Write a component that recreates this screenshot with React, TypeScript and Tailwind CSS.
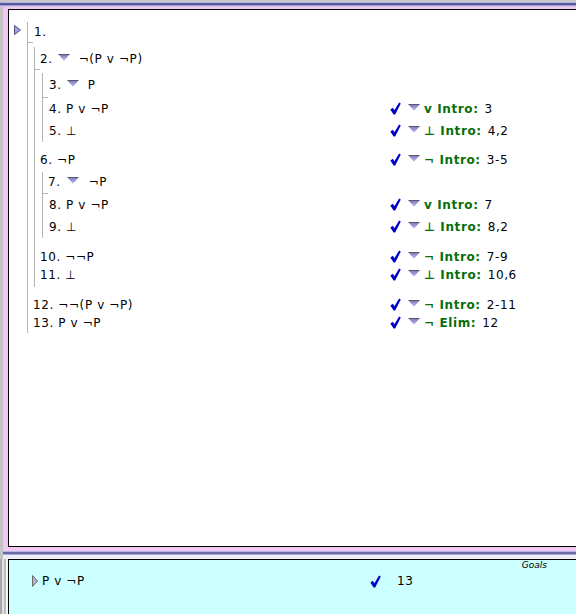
import React from "react";

const Check = () => (
  <svg width="11" height="13" viewBox="0 0 11 13" className="shrink-0">
    <path d="M0.3 7.4 L2.9 5.8 L4.4 8.2 L9.1 0.4 L10.8 1.5 L5.2 12.6 L3.6 12.6 Z" fill="#0000cc" />
  </svg>
);

const DownTri = () => (
  <svg width="12" height="7" viewBox="0 0 12 7" className="shrink-0">
    <defs>
      <linearGradient id="dg" x1="0" y1="0" x2="0" y2="1">
        <stop offset="0" stopColor="#7878b8" />
        <stop offset="1" stopColor="#c4c4f0" />
      </linearGradient>
    </defs>
    <polygon points="0.5,0.5 11.5,0.5 6,6.8" fill="url(#dg)" />
    <line x1="0.5" y1="0.5" x2="11.5" y2="0.5" stroke="#585868" strokeWidth="1" />
  </svg>
);

const Just = ({ sym, rule, refs }: { sym: string; rule: string; refs: string }) => (
  <div className="w-[186px] shrink-0 flex items-center">
    <Check />
    <span className="ml-[7px] mb-[3px] flex">
      <DownTri />
    </span>
    <span className="ml-[4px] font-bold text-[#0a6e0a] whitespace-pre">
      {sym} {rule}:
    </span>
    <span className="ml-[6px]">{refs}</span>
  </div>
);

const Tick = ({ cls }: { cls: string }) => <div className={cls} />;

export default function App() {
  return (
    <div className="w-[576px] h-[614px] overflow-hidden flex flex-col bg-[#c8c8c8] font-['DejaVu_Sans',sans-serif] text-[12px] leading-none text-black tracking-[0.6px]">
      <div className="h-[2px] shrink-0 bg-[#c8c8c8]" />
      <div className="h-[1px] shrink-0 bg-[#b4b4e6]" />
      <div className="h-[2px] shrink-0 bg-[#5a5a9a]" />
      <div className="h-[1px] shrink-0 bg-[#9a9ad6]" />
      <div className="h-[1px] shrink-0 bg-[#d8c8f0]" />
      <div className="h-[540px] shrink-0 flex">
        <div className="w-[3px] bg-[#c4c4c4]" />
        <div className="flex-1 bg-[#f0c8f0] pt-[2px] pl-[5px] flex">
          <div className="flex-1 bg-white border-t border-l border-b border-black flex items-start">
            <svg width="7" height="10" viewBox="0 0 7 10" className="ml-[5px] mt-[15px] shrink-0">
              <polygon points="0.5,0.5 6.5,5 0.5,9.5" fill="#a0a0e4" stroke="#505080" strokeWidth="1" />
            </svg>
            <div className="flex-1 ml-[6px] mt-[12px] border-l border-[#b4b4b4] pb-[3px]">
              <div className="h-[16px] pt-[3px] pl-[6px] flex items-center">1.</div>
              <Tick cls="mt-[4px] w-[5px] h-[1px] bg-[#b4b4b4]" />
              {/* subproof 2-11 */}
              <div className="mt-[4px] ml-[6px] border-l border-[#b4b4b4] pb-[5px]">
                <div className="h-[20px] pt-[3px] pl-[5px] flex items-center">
                  <span>2.</span>
                  <span className="ml-[5px] mb-[2px] flex">
                    <DownTri />
                  </span>
                  <span className="ml-[9px]">¬(P v ¬P)</span>
                </div>
                <Tick cls="mt-[2px] w-[5px] h-[1px] bg-[#b4b4b4]" />
                {/* subproof 3-5 */}
                <div className="mt-[3px] ml-[7px] border-l border-[#b4b4b4]">
                  <div className="h-[20px] pt-[3px] pl-[6px] flex items-center">
                    <span>3.</span>
                    <span className="ml-[5px] mb-[2px] flex">
                      <DownTri />
                    </span>
                    <span className="ml-[9px]">P</span>
                  </div>
                  <Tick cls="mt-[4px] w-[5px] h-[1px] bg-[#b4b4b4]" />
                  <div className="h-[18px] pt-[3px] pl-[6px] flex items-center">
                    <span className="flex-1 whitespace-pre">4. P v ¬P</span>
                    <Just sym="v" rule="Intro" refs="3" />
                  </div>
                  <div className="h-[26px] pt-[3px] pl-[6px] flex items-center">
                    <span className="flex-1 whitespace-pre">5. ⊥</span>
                    <Just sym="⊥" rule="Intro" refs="4,2" />
                  </div>
                </div>
                <div className="mt-[4px] h-[24px] pt-[3px] pl-[5px] flex items-center">
                  <span className="flex-1 whitespace-pre">6. ¬P</span>
                  <Just sym="¬" rule="Intro" refs="3-5" />
                </div>
                {/* subproof 7-9 */}
                <div className="mt-[2px] ml-[7px] border-l border-[#b4b4b4]">
                  <div className="h-[16px] pt-[3px] pl-[5px] flex items-center">
                    <span>7.</span>
                    <span className="ml-[6px] mb-[2px] flex">
                      <DownTri />
                    </span>
                    <span className="ml-[10px]">¬P</span>
                  </div>
                  <Tick cls="mt-[5px] w-[5px] h-[1px] bg-[#b4b4b4]" />
                  <div className="h-[18px] pt-[3px] pl-[6px] flex items-center">
                    <span className="flex-1 whitespace-pre">8. P v ¬P</span>
                    <Just sym="v" rule="Intro" refs="7" />
                  </div>
                  <div className="h-[26px] pt-[3px] pl-[6px] flex items-center">
                    <span className="flex-1 whitespace-pre">9. ⊥</span>
                    <Just sym="⊥" rule="Intro" refs="8,2" />
                  </div>
                </div>
                <div className="mt-[8px] h-[18px] pt-[3px] pl-[5px] flex items-center">
                  <span className="flex-1 whitespace-pre">10. ¬¬P</span>
                  <Just sym="¬" rule="Intro" refs="7-9" />
                </div>
                <div className="h-[18px] pt-[3px] pl-[5px] flex items-center">
                  <span className="flex-1 whitespace-pre">11. ⊥</span>
                  <Just sym="⊥" rule="Intro" refs="10,6" />
                </div>
              </div>
              <div className="mt-[7px] h-[18px] pt-[3px] pl-[5px] flex items-center">
                <span className="flex-1 whitespace-pre">12. ¬¬(P v ¬P)</span>
                <Just sym="¬" rule="Intro" refs="2-11" />
              </div>
              <div className="h-[18px] pt-[3px] pl-[5px] flex items-center">
                <span className="flex-1 whitespace-pre">13. P v ¬P</span>
                <Just sym="¬" rule="Elim" refs="12" />
              </div>
            </div>
          </div>
        </div>
      </div>
      {/* divider */}
      <div className="h-[12px] shrink-0 flex">
        <div className="w-[3px] bg-[#c4c4c4]" />
        <div className="flex-1 flex flex-col">
          <div className="h-[4px] bg-[#f0c8f0]" />
          <div className="h-[1px] bg-[#b4b4e6]" />
          <div className="h-[2px] bg-[#6a6aa6]" />
          <div className="h-[1px] bg-[#a8a8dc]" />
          <div className="h-[4px] bg-[#ececf4]" />
        </div>
      </div>
      {/* goals panel */}
      <div className="flex-1 flex">
        <div className="w-[8px] flex">
          <div className="w-[2px] bg-[#a8a8a8]" />
          <div className="w-[2px] bg-[#e0e0e0]" />
          <div className="w-[2px] bg-[#bcbcbc]" />
          <div className="w-[2px] bg-[#f4f4f4]" />
        </div>
        <div className="flex-1 bg-[#ccffff] border-t border-l border-black flex flex-col">
          <div className="h-[11px] flex justify-end pr-[29px] items-center text-[9px] italic tracking-normal">
            Goals
          </div>
          <div className="h-[18px] pt-[2px] pl-[23px] flex items-center">
            <div className="w-[338px] flex items-center">
              <svg width="6" height="12" viewBox="0 0 6 12" className="shrink-0">
                <polygon points="0.5,0.5 5.5,6 0.5,11.5" fill="#b4b4cc" stroke="#6a6a6a" strokeWidth="1" />
              </svg>
              <span className="ml-[4px] whitespace-pre">P v ¬P</span>
            </div>
            <Check />
            <span className="ml-[16px]">13</span>
          </div>
        </div>
      </div>
    </div>
  );
}
